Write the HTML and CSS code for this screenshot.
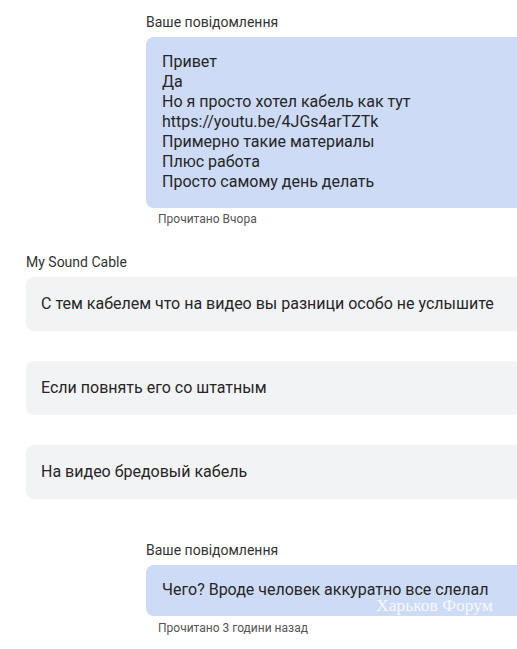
FILE: index.html
```html
<!DOCTYPE html>
<html lang="uk">
<head>
<meta charset="utf-8">
<link rel="stylesheet" href="styles.css">
</head>
<body>
<div class="chat">
  <section class="group mine first">
    <div class="label">Ваше повідомлення</div>
    <div class="bubble blue">
      <div>Привет</div>
      <div>Да</div>
      <div>Но я просто хотел кабель как тут</div>
      <div>https://youtu.be/4JGs4arTZTk</div>
      <div>Примерно такие материалы</div>
      <div>Плюс работа</div>
      <div>Просто самому день делать</div>
    </div>
    <div class="read">Прочитано Вчора</div>
  </section>

  <section class="group theirs">
    <div class="label">My Sound Cable</div>
    <div class="stack">
      <div class="bubble grey">С тем кабелем что на видео вы разници особо не услышите</div>
      <div class="bubble grey">Если повнять его со штатным</div>
      <div class="bubble grey">На видео бредовый кабель</div>
    </div>
  </section>

  <section class="group mine last">
    <div class="label">Ваше повідомлення</div>
    <div class="bubble blue short">
      Чего? Вроде человек аккуратно все слелал
      <span class="watermark">Харьков Форум</span>
    </div>
    <div class="read">Прочитано 3 години назад</div>
  </section>
</div>
</body>
</html>
```
FILE: styles.css
```css
html, body {
  margin: 0;
  padding: 0;
  background: #ffffff;
  overflow: hidden;
}
body {
  width: 517px;
  height: 649px;
  font-family: Roboto, "Noto Sans", "Liberation Sans", sans-serif;
  color: #222;
}
.chat {
  display: flex;
  flex-direction: column;
}
.group {
  display: flex;
  flex-direction: column;
}
.mine {
  padding-left: 146px;
}
.theirs {
  padding-left: 26px;
  margin-top: 28px;
}
.first {
  margin-top: 14px;
}
.last {
  margin-top: 43px;
}
.label {
  font-size: 14px;
  line-height: 16px;
  color: #333;
  margin-bottom: 7px;
}
.bubble {
  position: relative;
  font-size: 16px;
  line-height: 20px;
  border-radius: 8px;
  margin-right: -12px;
  padding: 15px 16px 16px 16px;
  color: #262626;
}
.blue {
  background: #cddbf7;
}
.grey {
  background: #f2f3f5;
  padding: 17px 15px 17px 15px;
}
.stack {
  display: flex;
  flex-direction: column;
  gap: 30px;
}
.read {
  font-size: 12px;
  line-height: 14px;
  color: #555;
  padding-left: 12px;
  margin-top: 4px;
}
.last .read {
  margin-top: 5px;
}
.watermark {
  position: absolute;
  left: 230px;
  top: 30px;
  font-family: "Liberation Serif", "DejaVu Serif", serif;
  font-size: 17.5px;
  line-height: 20px;
  color: rgba(255, 255, 255, 0.85);
  white-space: nowrap;
}
```
